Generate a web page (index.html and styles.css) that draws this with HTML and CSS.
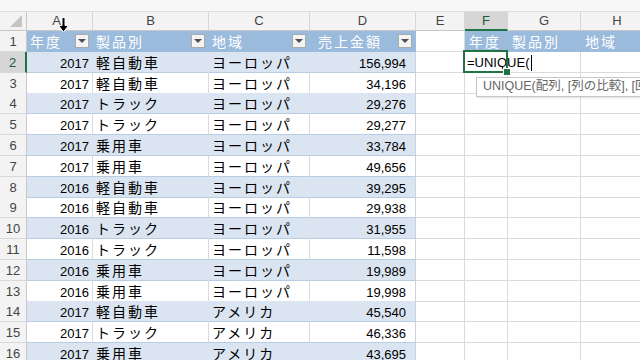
FILE: index.html
```html
<!DOCTYPE html>
<html lang="ja">
<head>
    <meta charset="UTF-8">
    <meta name="viewport" content="width=device-width, initial-scale=1.0">
    <title>UNIQUE 関数</title>
    <link rel="stylesheet" href="styles.css">
</head>
<body>
    <div class="sheet">
        <div class="strip"></div>

        <div class="row colrow">
            <div class="corner"><span class="tri"></span></div>
            <div class="colh cur">A
                <svg class="pointer" width="11" height="16" viewBox="0 0 11 16">
                    <path d="M4 0.5 H7 V8.5 H10.5 L5.5 15 L0.5 8.5 H4 Z" fill="#000" stroke="#fff" stroke-width="1"/>
                </svg>
            </div>
            <div class="colh">B</div>
            <div class="colh">C</div>
            <div class="colh">D</div>
            <div class="colh">E</div>
            <div class="colh sel">F</div>
            <div class="colh">G</div>
            <div class="colh">H</div>
        </div>

        <div class="row">
            <div class="rh">1</div>
            <div class="cell th">年度<span class="filter"></span></div>
            <div class="cell th">製品別<span class="filter"></span></div>
            <div class="cell th">地域<span class="filter"></span></div>
            <div class="cell th amt-h">売上金額<span class="filter"></span></div>
            <div class="cell"></div>
            <div class="cell th out">年度</div>
            <div class="cell th out">製品別</div>
            <div class="cell th out">地域</div>
        </div>

        <div class="row band">
            <div class="rh sel">2</div>
            <div class="cell t num">2017</div>
            <div class="cell t jp">軽自動車</div>
            <div class="cell t jp">ヨーロッパ</div>
            <div class="cell t num amt">156,994</div>
            <div class="cell"></div>
            <div class="cell active"><span class="entry">=UNIQUE(</span><span class="caret"></span>
                <span class="sel-box"><span class="handle"></span></span>
                <div class="tip">UNIQUE(配列, [列の比較], [回数指定])</div>
            </div>
            <div class="cell"></div>
            <div class="cell"></div>
        </div>

        <div class="row">
            <div class="rh">3</div>
            <div class="cell t num">2017</div>
            <div class="cell t jp">軽自動車</div>
            <div class="cell t jp">ヨーロッパ</div>
            <div class="cell t num amt">34,196</div>
            <div class="cell"></div><div class="cell"></div><div class="cell"></div><div class="cell"></div>
        </div>

        <div class="row band">
            <div class="rh">4</div>
            <div class="cell t num">2017</div>
            <div class="cell t jp">トラック</div>
            <div class="cell t jp">ヨーロッパ</div>
            <div class="cell t num amt">29,276</div>
            <div class="cell"></div><div class="cell"></div><div class="cell"></div><div class="cell"></div>
        </div>

        <div class="row">
            <div class="rh">5</div>
            <div class="cell t num">2017</div>
            <div class="cell t jp">トラック</div>
            <div class="cell t jp">ヨーロッパ</div>
            <div class="cell t num amt">29,277</div>
            <div class="cell"></div><div class="cell"></div><div class="cell"></div><div class="cell"></div>
        </div>

        <div class="row band">
            <div class="rh">6</div>
            <div class="cell t num">2017</div>
            <div class="cell t jp">乗用車</div>
            <div class="cell t jp">ヨーロッパ</div>
            <div class="cell t num amt">33,784</div>
            <div class="cell"></div><div class="cell"></div><div class="cell"></div><div class="cell"></div>
        </div>

        <div class="row">
            <div class="rh">7</div>
            <div class="cell t num">2017</div>
            <div class="cell t jp">乗用車</div>
            <div class="cell t jp">ヨーロッパ</div>
            <div class="cell t num amt">49,656</div>
            <div class="cell"></div><div class="cell"></div><div class="cell"></div><div class="cell"></div>
        </div>

        <div class="row band">
            <div class="rh">8</div>
            <div class="cell t num">2016</div>
            <div class="cell t jp">軽自動車</div>
            <div class="cell t jp">ヨーロッパ</div>
            <div class="cell t num amt">39,295</div>
            <div class="cell"></div><div class="cell"></div><div class="cell"></div><div class="cell"></div>
        </div>

        <div class="row">
            <div class="rh">9</div>
            <div class="cell t num">2016</div>
            <div class="cell t jp">軽自動車</div>
            <div class="cell t jp">ヨーロッパ</div>
            <div class="cell t num amt">29,938</div>
            <div class="cell"></div><div class="cell"></div><div class="cell"></div><div class="cell"></div>
        </div>

        <div class="row band">
            <div class="rh">10</div>
            <div class="cell t num">2016</div>
            <div class="cell t jp">トラック</div>
            <div class="cell t jp">ヨーロッパ</div>
            <div class="cell t num amt">31,955</div>
            <div class="cell"></div><div class="cell"></div><div class="cell"></div><div class="cell"></div>
        </div>

        <div class="row">
            <div class="rh">11</div>
            <div class="cell t num">2016</div>
            <div class="cell t jp">トラック</div>
            <div class="cell t jp">ヨーロッパ</div>
            <div class="cell t num amt">11,598</div>
            <div class="cell"></div><div class="cell"></div><div class="cell"></div><div class="cell"></div>
        </div>

        <div class="row band">
            <div class="rh">12</div>
            <div class="cell t num">2016</div>
            <div class="cell t jp">乗用車</div>
            <div class="cell t jp">ヨーロッパ</div>
            <div class="cell t num amt">19,989</div>
            <div class="cell"></div><div class="cell"></div><div class="cell"></div><div class="cell"></div>
        </div>

        <div class="row">
            <div class="rh">13</div>
            <div class="cell t num">2016</div>
            <div class="cell t jp">乗用車</div>
            <div class="cell t jp">ヨーロッパ</div>
            <div class="cell t num amt">19,998</div>
            <div class="cell"></div><div class="cell"></div><div class="cell"></div><div class="cell"></div>
        </div>

        <div class="row band">
            <div class="rh">14</div>
            <div class="cell t num">2017</div>
            <div class="cell t jp">軽自動車</div>
            <div class="cell t jp">アメリカ</div>
            <div class="cell t num amt">45,540</div>
            <div class="cell"></div><div class="cell"></div><div class="cell"></div><div class="cell"></div>
        </div>

        <div class="row">
            <div class="rh">15</div>
            <div class="cell t num">2017</div>
            <div class="cell t jp">トラック</div>
            <div class="cell t jp">アメリカ</div>
            <div class="cell t num amt">46,336</div>
            <div class="cell"></div><div class="cell"></div><div class="cell"></div><div class="cell"></div>
        </div>

        <div class="row band">
            <div class="rh">16</div>
            <div class="cell t num">2017</div>
            <div class="cell t jp">乗用車</div>
            <div class="cell t jp">アメリカ</div>
            <div class="cell t num amt">43,695</div>
            <div class="cell"></div><div class="cell"></div><div class="cell"></div><div class="cell"></div>
        </div>
    </div>
</body>
</html>
```

FILE: styles.css
```css
body {
    margin: 0;
    background-color: #fff;
    color: #000;
    font-family: "Liberation Sans", Arial, "Noto Sans CJK JP", sans-serif;
    font-size: 13px;
    overflow: hidden;
}

.sheet {
    width: 654px;
}

.strip {
    height: 12px;
    background-color: #f7f7f7;
    border-bottom: 1px solid #dcdcdc;
    box-sizing: border-box;
}

.row {
    display: grid;
    grid-template-columns: 27px 66px 116px 101px 106px 49px 43px 73px 73px;
    height: 20.8px;
}

.row > div {
    box-sizing: border-box;
    display: flex;
    align-items: center;
    white-space: nowrap;
    line-height: 16px;
}

/* column letters */
.colrow {
    height: 19px;
}

.corner {
    background-color: #f3f3f3;
    border-right: 1px solid #c8c8c8;
    border-bottom: 1px solid #c8c8c8;
    justify-content: flex-end;
    align-items: flex-end !important;
    padding: 0 4px 3px 0;
}

.tri {
    width: 0;
    height: 0;
    border-left: 12px solid transparent;
    border-bottom: 12px solid #c4c4c4;
}

.colh {
    justify-content: center;
    background-color: #f3f3f3;
    color: #444;
    border-right: 1px solid #d6d6d6;
    border-bottom: 1px solid #c8c8c8;
    font-size: 13px;
}

.colh.cur {
    position: relative;
    padding-right: 6px;
}

.pointer {
    position: absolute;
    left: 31px;
    top: 5px;
}

.colh.sel {
    background-color: #d6d6d6;
    color: #215a3a;
    border-bottom: 2px solid #217346;
}

/* row numbers */
.rh {
    justify-content: center;
    background-color: #f3f3f3;
    color: #444;
    border-right: 1px solid #c8c8c8;
    border-bottom: 1px solid #d8d8d8;
    padding-top: 2px;
}

.rh.sel {
    background-color: #d6d6d6;
    color: #215a3a;
    border-right: 2px solid #217346;
}

/* cells */
.cell {
    border-right: 1px solid #dadada;
    border-bottom: 1px solid #dadada;
    padding: 0 3px;
}

.t {
    border-bottom-color: #b8cce4;
}

.band .t {
    background-color: #dbe5f1;
    border-right-color: transparent;
}

.t.amt {
    border-right-color: #c9d3e0;
}

.num {
    justify-content: flex-end;
    padding-top: 4px;
}

.amt {
    padding-right: 9px;
}

.jp,
.th {
    font-family: "Noto Sans CJK JP", sans-serif;
    font-size: 14px;
    letter-spacing: 2px;
}

.th {
    background-color: #9bbbdd;
    color: #fff;
    border-right-color: #9bbbdd;
    border-bottom-color: #9bbbdd;
}

.th.out {
    padding-left: 4px;
}

.amt-h {
    padding-left: 8px;
}

.filter {
    margin-left: auto;
    width: 14px;
    height: 14px;
    box-sizing: border-box;
    background-color: #f4f4f4;
    border: 1px solid #a9a9a9;
    display: flex;
    justify-content: center;
    align-items: center;
}

.filter::after {
    content: "";
    border-left: 4px solid transparent;
    border-right: 4px solid transparent;
    border-top: 4px solid #505050;
}

/* active cell */
.cell.active {
    position: relative;
    overflow: visible;
    padding-left: 2px;
    padding-top: 3px;
    font-size: 13px;
    z-index: 2;
}

.entry {
    flex: none;
}

.caret {
    flex: none;
    display: block;
    width: 1px;
    height: 16px;
    background-color: #000;
    margin-left: 2px;
}

.sel-box {
    position: absolute;
    left: -2px;
    top: -2px;
    right: -1px;
    bottom: -1px;
    border: 2px solid #217346;
}

.handle {
    position: absolute;
    right: -5px;
    bottom: -5px;
    width: 6px;
    height: 6px;
    background-color: #217346;
    border: 1px solid #fff;
}

.tip {
    position: absolute;
    left: 11px;
    top: 25px;
    height: 18px;
    padding: 0 6px;
    background-color: #fff;
    border: 1px solid #c6c6c6;
    box-shadow: 1px 1px 2px rgba(0, 0, 0, 0.12);
    color: #666;
    font-size: 12.5px;
    line-height: 17px;
    white-space: nowrap;
    z-index: 5;
}
```
